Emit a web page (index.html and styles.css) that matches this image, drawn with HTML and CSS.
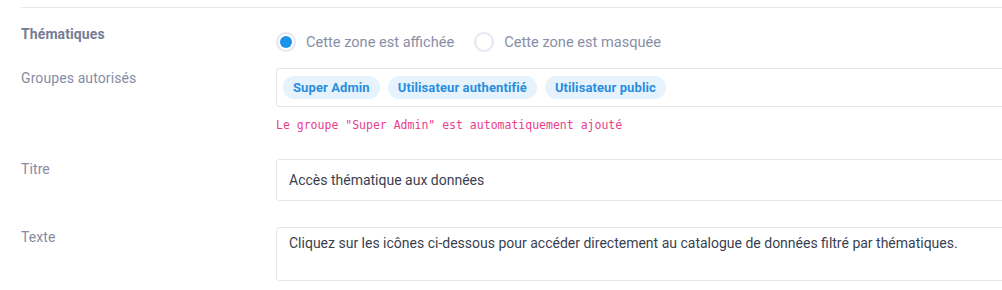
FILE: index.html
```html
<!doctype html>
<html>
  <head>
    <meta charset="utf-8" />
    <link rel="stylesheet" href="styles.css">
  </head>
  <body>
    <div class="panel">
      <div class="form-row form-row-first">
        <div class="field-label label-strong">Thématiques</div>
        <div class="field">
          <div class="radio-group">
            <label class="radio">
              <span class="radio-mark checked"></span>
              <span>Cette zone est affichée</span>
            </label>
            <label class="radio">
              <span class="radio-mark"></span>
              <span>Cette zone est masquée</span>
            </label>
          </div>
        </div>
      </div>

      <div class="form-row">
        <div class="field-label">Groupes autorisés</div>
        <div class="field">
          <div class="tag-box">
            <span class="tag">Super Admin</span>
            <span class="tag">Utilisateur authentifié</span>
            <span class="tag">Utilisateur public</span>
          </div>
          <code class="hint">Le groupe "Super Admin" est automatiquement ajouté</code>
        </div>
      </div>

      <div class="form-row">
        <div class="field-label">Titre</div>
        <div class="field">
          <div class="text-input">Accès thématique aux données</div>
        </div>
      </div>

      <div class="form-row">
        <div class="field-label">Texte</div>
        <div class="field">
          <div class="text-area">Cliquez sur les icônes ci-dessous pour accéder directement au catalogue de données filtré par thématiques.</div>
        </div>
      </div>
    </div>
  </body>
</html>
```

FILE: styles.css
```css
html, body {
  margin: 0;
  padding: 0;
  background: white;
  overflow: hidden;
}
body {
  font-family: Roboto, 'Liberation Sans', sans-serif;
  font-size: 14px;
  line-height: 20px;
  color: #3d4254;
}
.panel {
  margin: 7px 0 0 21px;
  width: 1100px;
  border-top: 1px solid #e6e8f1;
  padding-top: 16px;
}
.form-row {
  display: grid;
  grid-template-columns: 255px 1fr;
  margin-bottom: 26px;
}
.form-row-first {
  margin-bottom: 16px;
}
.field-label {
  color: #878ca4;
  letter-spacing: 0.1px;
}
.label-strong {
  font-weight: 700;
  color: #757b96;
}
.radio-group {
  display: flex;
  gap: 20px;
  padding-top: 8px;
}
.radio {
  display: flex;
  align-items: center;
  gap: 10px;
  color: #898ea6;
  font-size: 14.6px;
}
.radio-mark {
  width: 20px;
  height: 20px;
  box-sizing: border-box;
  border: 2px solid #e2e7f1;
  border-radius: 50%;
  display: flex;
  align-items: center;
  justify-content: center;
}
.radio-mark.checked::after {
  content: "";
  width: 12px;
  height: 12px;
  border-radius: 50%;
  background: #1a93ea;
}
.tag-box {
  display: flex;
  gap: 8px;
  padding: 6px 6px;
  border: 1px solid #e3e8f0;
  border-radius: 3px;
  height: 25px;
  align-items: center;
}
.tag {
  background: #e6f3fd;
  color: #2a8de0;
  font-weight: 700;
  font-size: 13px;
  letter-spacing: 0.1px;
  line-height: 23px;
  padding: 0 10px;
  border-radius: 12px;
}
.hint {
  display: block;
  margin-top: 10px;
  font-family: 'DejaVu Sans Mono', 'Liberation Mono', monospace;
  font-size: 11.5px;
  line-height: 16px;
  color: #e83e8c;
}
.text-input,
.text-area {
  border: 1px solid #e3e8f0;
  border-radius: 3px;
  padding: 10px 12px;
  color: #3a3f50;
}
.text-area {
  padding-top: 5px;
  height: 37px;
}
```
